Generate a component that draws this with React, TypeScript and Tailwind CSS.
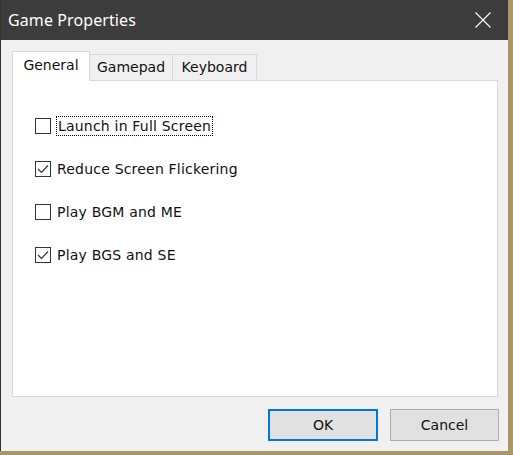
import React, { useState } from 'react';

const font = { fontFamily: '"DejaVu Sans", Verdana, sans-serif' };

const options = [
  { label: 'Launch in Full Screen', checked: false, focused: true },
  { label: 'Reduce Screen Flickering', checked: true },
  { label: 'Play BGM and ME', checked: false },
  { label: 'Play BGS and SE', checked: true },
];

function CheckBox({ checked }: { checked: boolean }) {
  return (
    <div className="w-[16px] h-[16px] border border-[#333333] bg-white flex items-center justify-center shrink-0">
      {checked && (
        <svg width="12" height="10" viewBox="0 0 12 10" fill="none">
          <path d="M1 5 L4.5 8.5 L11 1.5" stroke="#333333" strokeWidth="1.2" />
        </svg>
      )}
    </div>
  );
}

export default function App() {
  const [tab, setTab] = useState('General');
  const [values, setValues] = useState(options.map((o) => o.checked));

  return (
    <div className="w-[513px] h-[455px] bg-[#a8966a] overflow-hidden" style={font}>
      <div className="w-[508px] h-[451px] flex flex-col border-l border-[#3a3226]">
        {/* Title bar */}
        <div className="h-[40px] bg-[#3c3c3c] flex items-center justify-between pl-[7px] pr-[17px] shrink-0">
          <span className="text-white text-[16px] tracking-[0.1px]" style={{ fontFamily: '"Noto Sans", sans-serif' }}>
            Game Properties
          </span>
          <svg width="16" height="16" viewBox="0 0 16 16">
            <path d="M0.5 0.5 L15.5 15.5 M15.5 0.5 L0.5 15.5" stroke="#ffffff" strokeWidth="1.1" />
          </svg>
        </div>

        {/* Body */}
        <div className="flex-1 bg-[#f0f0f0] pt-[11px] pl-[11px] pr-[10px] flex flex-col">
          <div className="flex items-end h-[29px] text-[14px] text-[#111111]">
            {['General', 'Gamepad', 'Keyboard'].map((t) => {
              const active = t === tab;
              return (
                <button
                  key={t}
                  onClick={() => setTab(t)}
                  className={
                    active
                      ? 'relative z-10 w-[78px] h-[30px] -mb-px bg-white border border-b-0 border-[#d9d9d9] pb-[3px]'
                      : t === 'Gamepad'
                      ? 'w-[83px] h-[26px] bg-[#f0f0f0] border border-l-0 border-b-0 border-[#d9d9d9]'
                      : 'w-[84px] h-[26px] bg-[#f0f0f0] border border-l-0 border-b-0 border-[#d9d9d9]'
                  }
                >
                  {t}
                </button>
              );
            })}
          </div>

          <div className="h-[317px] w-[486px] bg-white border border-[#d9d9d9] pt-[37px] pl-[22px] flex flex-col gap-[27px]">
            {options.map((o, i) => (
              <label
                key={o.label}
                className="flex items-center h-[16px] cursor-default"
                onClick={() => setValues(values.map((v, j) => (j === i ? !v : v)))}
              >
                <CheckBox checked={values[i]} />
                <span
                  className={
                    o.focused
                      ? 'ml-[5px] pl-px pr-[1px] h-[20px] flex items-center border border-dotted border-black text-[14px] tracking-[0.2px] text-[#111111]'
                      : 'ml-[6px] text-[14px] tracking-[0.2px] text-[#111111]'
                  }
                >
                  {o.label}
                </span>
              </label>
            ))}
          </div>

          <div className="flex justify-end gap-[12px] mt-[12px] pr-0">
            <button className="w-[110px] h-[32px] bg-[#e1e1e1] border-2 border-[#0078d7] text-[14px] text-[#111111]">
              OK
            </button>
            <button className="w-[109px] h-[32px] bg-[#e1e1e1] border border-[#adadad] text-[14px] text-[#111111] -mr-px">
              Cancel
            </button>
          </div>
        </div>
      </div>
    </div>
  );
}
